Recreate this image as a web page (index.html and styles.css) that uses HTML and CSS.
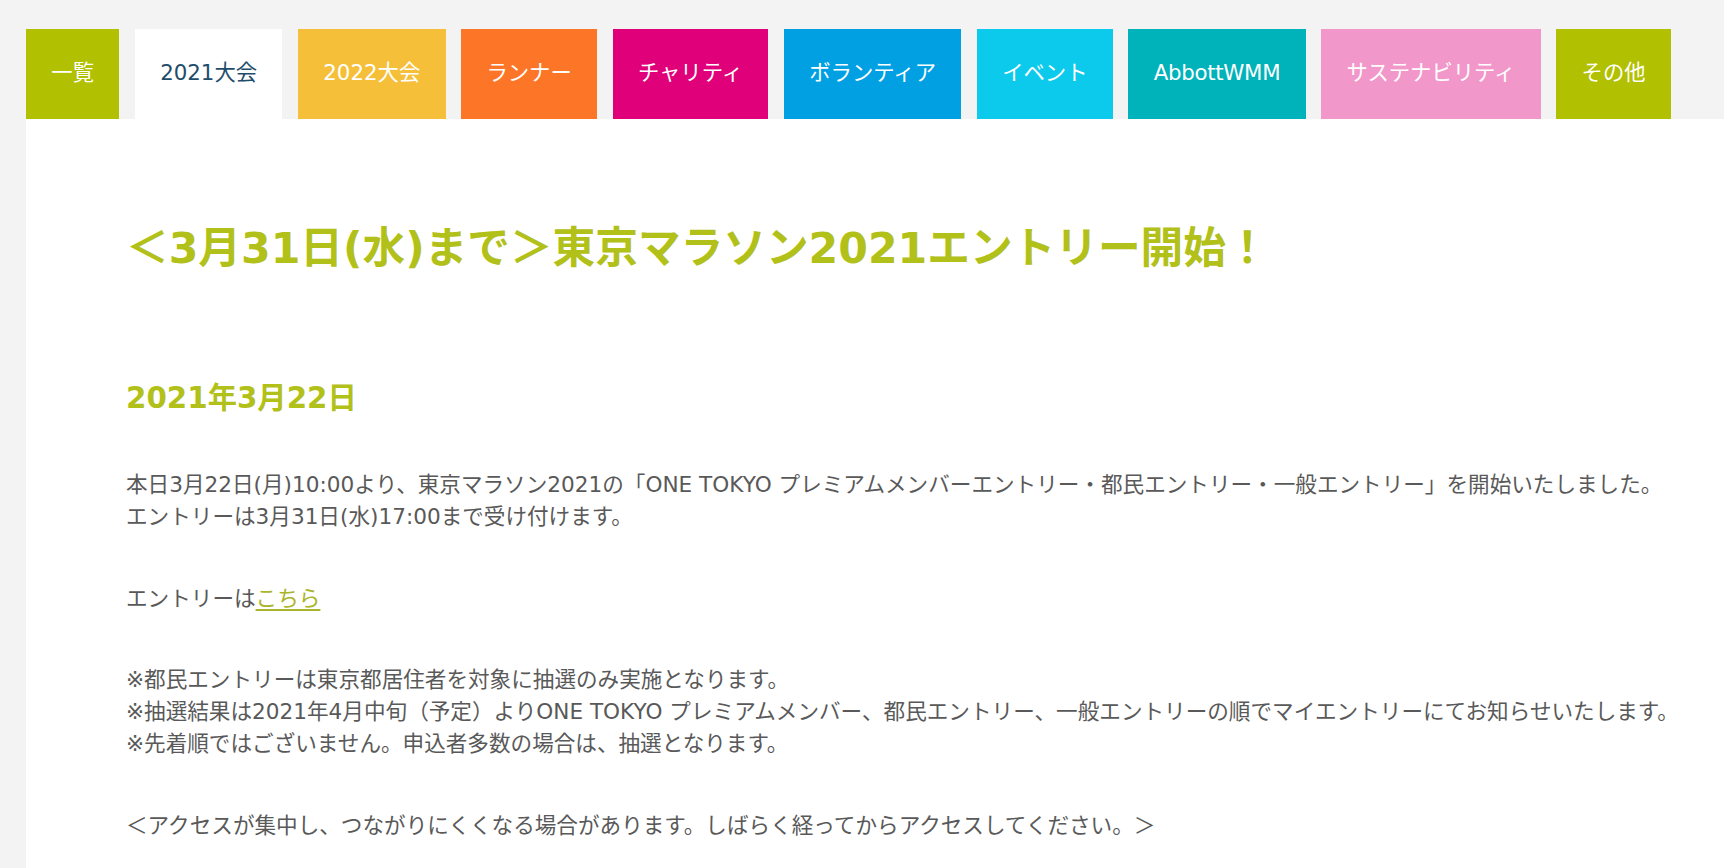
FILE: index.html
```html
<!DOCTYPE html>
<html lang="ja">
<head>
<meta charset="utf-8">
<title>東京マラソン2021エントリー開始</title>
<link rel="stylesheet" href="styles.css">
</head>
<body>
<nav class="tabs">
  <a class="tab tab-all" href="#">一覧</a>
  <a class="tab tab-2021 is-active" href="#">2021大会</a>
  <a class="tab tab-2022" href="#">2022大会</a>
  <a class="tab tab-runner" href="#">ランナー</a>
  <a class="tab tab-charity" href="#">チャリティ</a>
  <a class="tab tab-volunteer" href="#">ボランティア</a>
  <a class="tab tab-event" href="#">イベント</a>
  <a class="tab tab-abbott" href="#">AbbottWMM</a>
  <a class="tab tab-sustain" href="#">サステナビリティ</a>
  <a class="tab tab-other" href="#">その他</a>
</nav>
<main class="article">
  <h1 class="article-title">＜3月31日(水)まで＞東京マラソン2021エントリー開始！</h1>
  <p class="article-date">2021年3月22日</p>
  <p class="text">本日3月22日(月)10:00より、東京マラソン2021の「ONE TOKYO プレミアムメンバーエントリー・都民エントリー・一般エントリー」を開始いたしました。<br>エントリーは3月31日(水)17:00まで受け付けます。</p>
  <p class="text">エントリーは<a class="link" href="#">こちら</a></p>
  <p class="text">※都民エントリーは東京都居住者を対象に抽選のみ実施となります。<br>※抽選結果は2021年4月中旬（予定）よりONE TOKYO プレミアムメンバー、都民エントリー、一般エントリーの順でマイエントリーにてお知らせいたします。<br>※先着順ではございません。申込者多数の場合は、抽選となります。</p>
  <p class="text">＜アクセスが集中し、つながりにくくなる場合があります。しばらく経ってからアクセスしてください。＞</p>
</main>
</body>
</html>
```
FILE: styles.css
```css
html, body {
  margin: 0;
  padding: 0;
}
body {
  background: #f3f3f3;
  font-family: "DejaVu Sans", "Noto Sans CJK JP", sans-serif;
  color: #555555;
}
.tabs {
  display: flex;
  gap: 15.6px;
  padding: 29px 0 0 26px;
}
.tab {
  display: flex;
  align-items: center;
  justify-content: center;
  height: 90px;
  padding: 0 25.3px 2px 25.3px;
  font-size: 21.33px;
  line-height: 1;
  color: #ffffff;
  text-decoration: none;
  white-space: nowrap;
  box-sizing: border-box;
}
.tab-abbott { letter-spacing: -0.3px; }
.tab-all { background: #b1c000; }
.tab-2021 { background: #ffffff; color: #1e4d6b; }
.tab-2022 { background: #f5bf3a; }
.tab-runner { background: #fd7526; }
.tab-charity { background: #e0007a; }
.tab-volunteer { background: #00a0e3; }
.tab-event { background: #0ccaeb; }
.tab-abbott { background: #00b2b9; }
.tab-sustain { background: #f297c9; }
.tab-other { background: #b1c000; }

.article {
  display: block;
  margin-left: 26px;
  background: #ffffff;
  padding: 97px 100px 60px 100px;
  min-height: 700px;
}
.article-title {
  margin: 0;
  font-size: 42.67px;
  line-height: 64px;
  font-weight: bold;
  color: #b2c01a;
  white-space: nowrap;
}
.article-date {
  margin: 96px 0 49px 0;
  font-size: 29.33px;
  line-height: 44px;
  font-weight: bold;
  color: #b2c01a;
}
.text {
  margin: 0 0 49.5px 0;
  font-size: 21.6px;
  line-height: 32px;
  color: #595959;
  white-space: nowrap;
}
.link {
  color: #a9b52b;
  text-decoration: underline;
  text-decoration-thickness: 2px;
  text-underline-offset: 3px;
}
```
